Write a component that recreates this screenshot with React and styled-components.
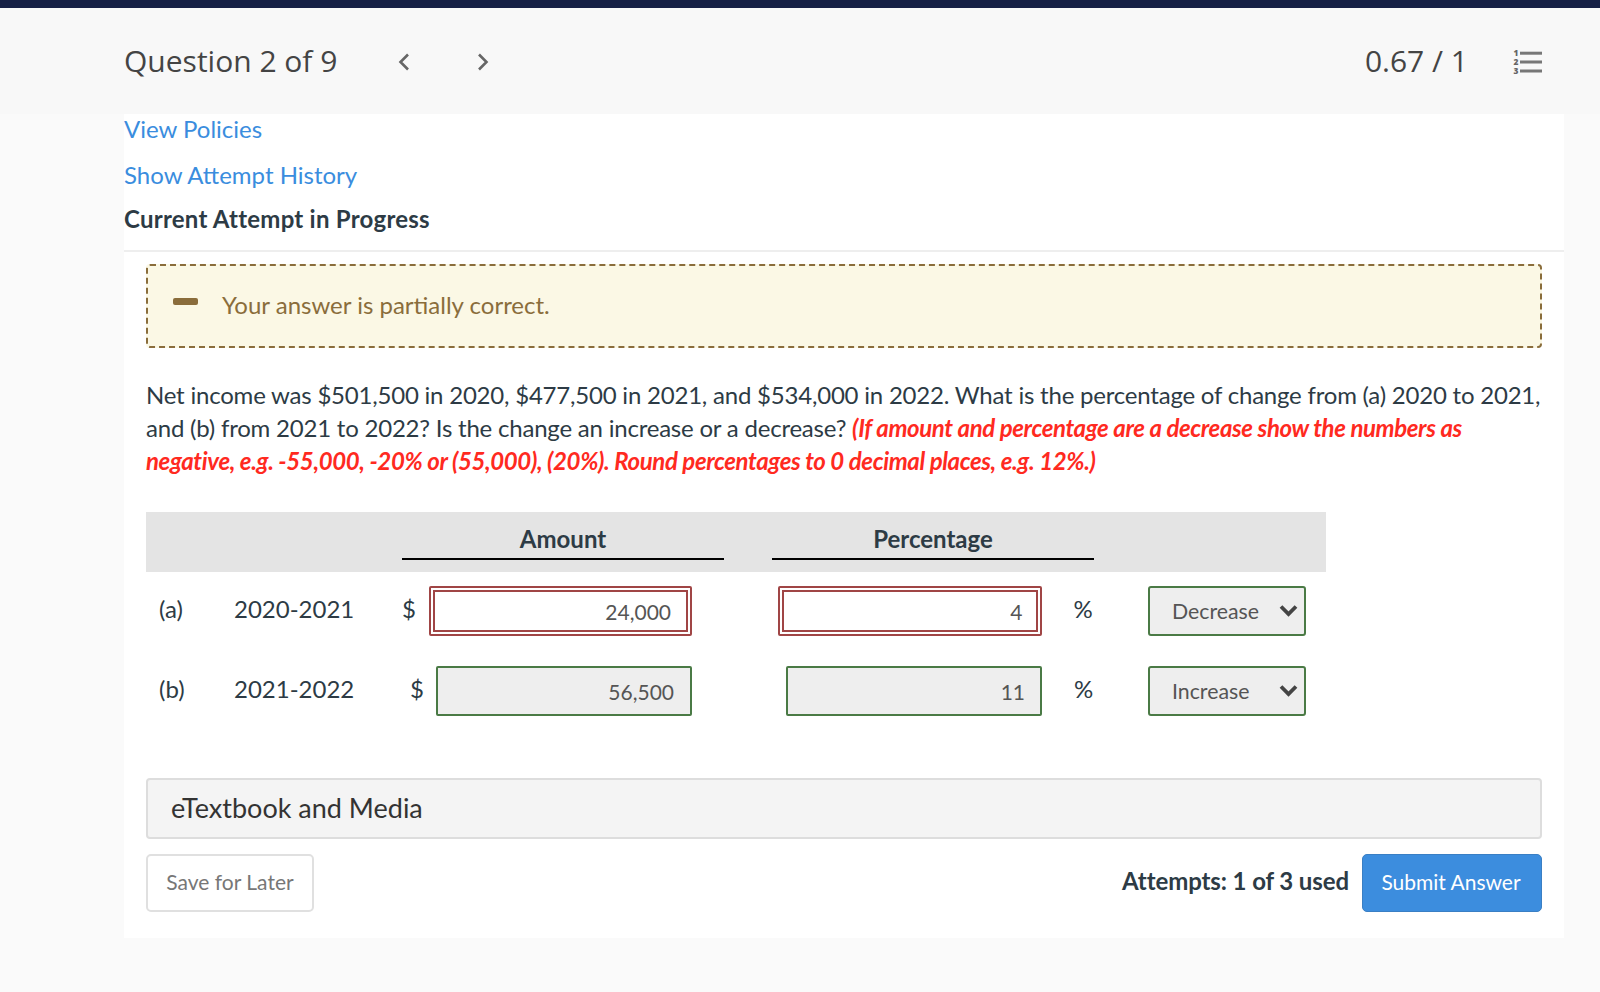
import styled, { createGlobalStyle } from "styled-components";

const GlobalStyle = createGlobalStyle`
  html, body {
    margin: 0;
    padding: 0;
    background: #fafafa;
    font-family: Lato, "Liberation Sans", sans-serif;
    color: #2d3b45;
  }
  * { box-sizing: border-box; }
`;

const TopBar = styled.div`
  height: 8px;
  background: #162045;
`;

const Header = styled.header`
  height: 106px;
  background: #f8f8f8;
  display: flex;
  align-items: center;
  padding: 0 58px 2px 124px;
  font-family: "Open Sans", sans-serif;
  font-size: 30px;
  color: #444;
`;

const Title = styled.div`
  width: 273px;
`;

const Nav = styled.div`
  display: flex;
  gap: 65px;
  flex: 1;
  margin-top: 4px;
  svg { display: block; }
`;

const Score = styled.div`
  margin-right: 45px;
`;

const IconSlot = styled.div`
  margin-top: 4px;
  svg { display: block; overflow: visible; }
`;

const Panel = styled.main`
  margin-left: 124px;
  width: 1440px;
  background: #fff;
  padding-bottom: 26px;
`;

const PanelLink = styled.a`
  display: block;
  height: 31px;
  line-height: 29px;
  margin-bottom: 15px;
  font-size: 24px;
  color: #3a8dde;
  text-decoration: none;
`;

const AttemptTitle = styled.div`
  height: 48px;
  margin-top: -2px;
  padding-bottom: 15px;
  line-height: 29px;
  font-size: 24px;
  font-weight: 700;
  letter-spacing: 0.24px;
  color: #2d3b45;
  border-bottom: 2px solid #eee;
`;

const Body = styled.div`
  padding: 12px 22px 0;
`;

const Alert = styled.div`
  height: 84px;
  display: flex;
  align-items: center;
  padding: 0 0 4px 25px;
  background: #fbf8e5;
  border: 2px dashed #8a6d3b;
  border-radius: 4px;
  color: #8a6d3b;
  font-size: 24px;
`;

const MinusMark = styled.span`
  width: 25px;
  height: 7px;
  margin: -5px 24px 0 0;
  border-radius: 2px;
  background: #8a6d3b;
`;

const Question = styled.p`
  margin: 30px 0 35px;
  font-size: 24px;
  line-height: 33px;
  letter-spacing: -0.21px;
  color: #2d3b45;
`;

const Instruction = styled.em`
  font-weight: 700;
  color: #ff2a1f;
  letter-spacing: -0.38px;
`;

const TableGrid = styled.div`
  width: 1180px;
  display: grid;
  grid-template-columns: 88px 168px 322px 48px 322px 54px 178px;
`;

const HeadBand = styled.div`
  grid-column: 1 / -1;
  height: 60px;
  margin-bottom: 14px;
  display: grid;
  grid-template-columns: subgrid;
  background: #e4e4e4;
`;

const HeadCell = styled.div`
  grid-column: ${(p) => p.$col};
  height: 48px;
  line-height: 54px;
  text-align: center;
  font-size: 24px;
  font-weight: 700;
  color: #2d3b45;
  border-bottom: 2px solid #000;
`;

const Row = styled.div`
  grid-column: 1 / -1;
  height: 50px;
  margin-bottom: 30px;
  display: grid;
  grid-template-columns: subgrid;
  align-items: center;
  font-size: 24px;
  color: #2d3b45;
`;

const RowLabel = styled.div`
  padding-left: 13px;
  margin-top: -6px;
`;

const Period = styled.div`
  margin-top: -6px;
`;

const AmountCell = styled.div`
  display: flex;
  align-items: center;
  height: 50px;
  padding-left: ${(p) => (p.$correct ? "8px" : "0")};
`;

const Dollar = styled.span`
  width: ${(p) => (p.$correct ? "26px" : "26.5px")};
  margin-top: -6px;
`;

const PercentCell = styled.div`
  display: flex;
  align-items: center;
  height: 50px;
  padding-left: ${(p) => (p.$correct ? "14px" : "6px")};
`;

const PercentSign = styled.span`
  margin: -6px 0 0 32px;
`;

const ValueBox = styled.div`
  flex: none;
  width: ${(p) => (p.$correct ? "256px" : "263.5px")};
  height: 50px;
  display: flex;
  align-items: center;
  justify-content: flex-end;
  padding-right: ${(p) => p.$inset}px;
  font-size: 21px;
  color: #555;
  border-radius: 2px;
  background: ${(p) => (p.$correct ? "#eee" : "#fff")};
  border: ${(p) => (p.$correct ? "2px solid #4a7a45" : "2px solid #a04545")};
  outline: ${(p) => (p.$correct ? "none" : "2px solid #a04545")};
  outline-offset: -6px;
`;

const SelectBox = styled.div`
  width: 157.5px;
  height: 50px;
  display: flex;
  align-items: center;
  justify-content: space-between;
  padding: 0 6px 0 22px;
  background: #eee;
  border: 2px solid #4a7a45;
  border-radius: 3px;
  font-size: 21.3px;
  color: #555;
  svg { margin-top: -2px; }
`;

const MediaBox = styled.div`
  height: 61px;
  margin-top: 32px;
  display: flex;
  align-items: center;
  padding: 0 0 2px 23px;
  background: #f4f4f4;
  border: 2px solid #ddd;
  border-radius: 4px;
  font-size: 27px;
  color: #333;
`;

const Footer = styled.div`
  margin-top: 15px;
  display: flex;
  align-items: center;
`;

const SaveButton = styled.button`
  width: 168px;
  height: 58px;
  padding: 0 0 3px;
  background: #fff;
  border: 2px solid #e0e0e0;
  border-radius: 5px;
  font: 400 21px Lato, sans-serif;
  color: #777;
`;

const Attempts = styled.div`
  margin: 0 13px 5px auto;
  font-size: 24px;
  font-weight: 700;
  letter-spacing: -0.1px;
  color: #2d3b45;
`;

const SubmitButton = styled.button`
  width: 180px;
  height: 58px;
  padding: 0 2px 3px 0;
  background: #3c8dde;
  border: 1px solid #3a7fc4;
  border-radius: 5px;
  font: 400 21px Lato, sans-serif;
  color: #fff;
`;

const Chevron = ({ dir }) => (
  <svg width="14" height="22" viewBox="0 0 14 22" fill="none">
    <path
      d={dir === "left" ? "M11 3.5 3.5 11 11 18.5" : "M3 3.5 10.5 11 3 18.5"}
      stroke="#666"
      strokeWidth="2.6"
    />
  </svg>
);

const ListIcon = () => (
  <svg width="29" height="24" viewBox="0 0 29 24" fill="#777">
    <rect x="7" y="1.7" width="22" height="3" />
    <rect x="7" y="10.5" width="22" height="3" />
    <rect x="7" y="19.5" width="22" height="3" />
    <g fontFamily="Open Sans, sans-serif" fontSize="8.4" fontWeight="800" fill="#666">
      <text x="0.5" y="6">1</text>
      <text x="0.5" y="15">2</text>
      <text x="0.5" y="24">3</text>
    </g>
  </svg>
);

const SelectArrow = () => (
  <svg width="19" height="13" viewBox="0 0 19 13" fill="none">
    <path d="M2 2.5 9.5 10 17 2.5" stroke="#444" strokeWidth="3.8" />
  </svg>
);

const rows = [
  { label: "(a)", period: "2020-2021", amount: "24,000", percent: "4", ok: false, trend: "Decrease" },
  { label: "(b)", period: "2021-2022", amount: "56,500", percent: "11", ok: true, trend: "Increase" },
];

export default function App() {
  return (
    <>
      <GlobalStyle />
      <TopBar />
      <Header>
        <Title>Question 2 of 9</Title>
        <Nav>
          <Chevron dir="left" />
          <Chevron dir="right" />
        </Nav>
        <Score>0.67 / 1</Score>
        <IconSlot>
          <ListIcon />
        </IconSlot>
      </Header>
      <Panel>
        <PanelLink href="#">View Policies</PanelLink>
        <PanelLink href="#">Show Attempt History</PanelLink>
        <AttemptTitle>Current Attempt in Progress</AttemptTitle>
        <Body>
          <Alert>
            <MinusMark />
            Your answer is partially correct.
          </Alert>
          <Question>
            Net income was $501,500 in 2020, $477,500 in 2021, and $534,000 in 2022. What is the
            percentage of change from (a) 2020 to 2021, and (b) from 2021 to 2022? Is the change an
            increase or a decrease?{" "}
            <Instruction>
              (If amount and percentage are a decrease show the numbers as negative, e.g. -55,000,
              -20% or (55,000), (20%). Round percentages to 0 decimal places, e.g. 12%.)
            </Instruction>
          </Question>
          <TableGrid>
            <HeadBand>
              <HeadCell $col={3}>Amount</HeadCell>
              <HeadCell $col={5}>Percentage</HeadCell>
            </HeadBand>
            {rows.map((row) => (
              <Row key={row.label}>
                <RowLabel>{row.label}</RowLabel>
                <Period>{row.period}</Period>
                <AmountCell $correct={row.ok}>
                  <Dollar $correct={row.ok}>$</Dollar>
                  <ValueBox $correct={row.ok} $inset={row.ok ? 16 : 19}>{row.amount}</ValueBox>
                </AmountCell>
                <span />
                <PercentCell $correct={row.ok}>
                  <ValueBox $correct={row.ok} $inset={row.ok ? 15 : 17}>{row.percent}</ValueBox>
                  <PercentSign>%</PercentSign>
                </PercentCell>
                <span />
                <SelectBox>
                  {row.trend}
                  <SelectArrow />
                </SelectBox>
              </Row>
            ))}
          </TableGrid>
          <MediaBox>eTextbook and Media</MediaBox>
          <Footer>
            <SaveButton>Save for Later</SaveButton>
            <Attempts>Attempts: 1 of 3 used</Attempts>
            <SubmitButton>Submit Answer</SubmitButton>
          </Footer>
        </Body>
      </Panel>
    </>
  );
}
